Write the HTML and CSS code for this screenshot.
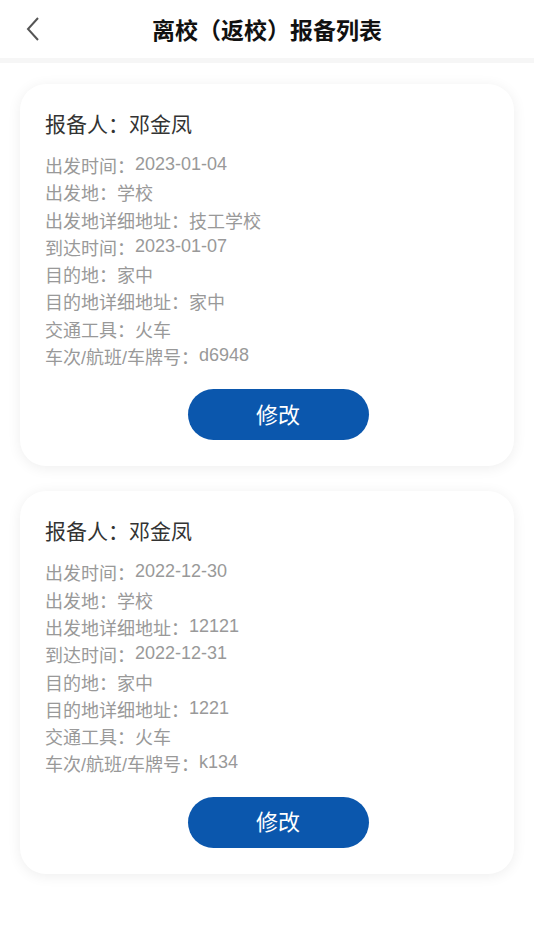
FILE: index.html
```html
<!DOCTYPE html>
<html lang="zh-CN">

<head>
    <meta charset="UTF-8" />
    <title>离校（返校）报备列表</title>
    <link rel="stylesheet" href="styles.css">
</head>

<body>
    <div class="nav-bar">
        <a class="back" href="#">
            <svg width="16" height="26" viewBox="0 0 16 26">
                <path d="M13 2 L3 13 L13 24" fill="none" stroke="#555" stroke-width="2" />
            </svg>
        </a>
        <h1>离校（返校）报备列表</h1>
    </div>
    <div class="nav-line"></div>

    <div class="list">
        <div class="card">
            <div class="name">报备人：邓金凤</div>
            <div class="info">
                <div class="row">出发时间：<span class="num">2023-01-04</span></div>
                <div class="row">出发地：学校</div>
                <div class="row">出发地详细地址：技工学校</div>
                <div class="row">到达时间：<span class="num">2023-01-07</span></div>
                <div class="row">目的地：家中</div>
                <div class="row">目的地详细地址：家中</div>
                <div class="row">交通工具：火车</div>
                <div class="row">车次/航班/车牌号：<span class="num">d6948</span></div>
            </div>
            <button type="button" class="edit-btn">修改</button>
        </div>

        <div class="card">
            <div class="name">报备人：邓金凤</div>
            <div class="info">
                <div class="row">出发时间：<span class="num">2022-12-30</span></div>
                <div class="row">出发地：学校</div>
                <div class="row">出发地详细地址：<span class="num">12121</span></div>
                <div class="row">到达时间：<span class="num">2022-12-31</span></div>
                <div class="row">目的地：家中</div>
                <div class="row">目的地详细地址：<span class="num">1221</span></div>
                <div class="row">交通工具：火车</div>
                <div class="row">车次/航班/车牌号：<span class="num">k134</span></div>
            </div>
            <button type="button" class="edit-btn">修改</button>
        </div>
    </div>
</body>

</html>
```

FILE: styles.css
```css
body {
    font-family: "Liberation Sans", Arial, "Noto Sans CJK SC", sans-serif;
    background: #fff;
    margin: 0;
}

.nav-bar {
    height: 58px;
    display: flex;
    align-items: center;
    justify-content: center;
    position: relative;
    background: #fff;
}

.nav-bar h1 {
    margin: 0;
    font-size: 23px;
    font-weight: bold;
    color: #111;
}

.back {
    position: absolute;
    left: 25px;
    top: 16px;
    display: flex;
}

.nav-line {
    height: 5px;
    background: #f6f6f6;
}

.list {
    padding: 21px 20px 40px;
    display: flex;
    flex-direction: column;
    gap: 25px;
}

.card {
    background: #fff;
    border-radius: 26px;
    box-shadow: 0 2px 14px rgba(0, 0, 0, 0.07);
    padding: 26px 25px 26px;
    display: flex;
    flex-direction: column;
}

.name {
    font-size: 21px;
    color: #333;
    line-height: 30px;
}

.info {
    margin-top: 14px;
    font-size: 18px;
    color: #999;
}

.row {
    height: 27.3px;
    line-height: 27px;
}

.num {
    font-size: 18px;
    line-height: 0;
    vertical-align: 3px;
}

.edit-btn {
    align-self: center;
    margin-top: 17px;
    margin-left: 22px;
    width: 181px;
    height: 51px;
    padding: 0 0 4px;
    border: none;
    border-radius: 26px;
    background: #0b57ad;
    color: #fff;
    font-family: inherit;
    font-size: 22px;
    cursor: pointer;
}
```
